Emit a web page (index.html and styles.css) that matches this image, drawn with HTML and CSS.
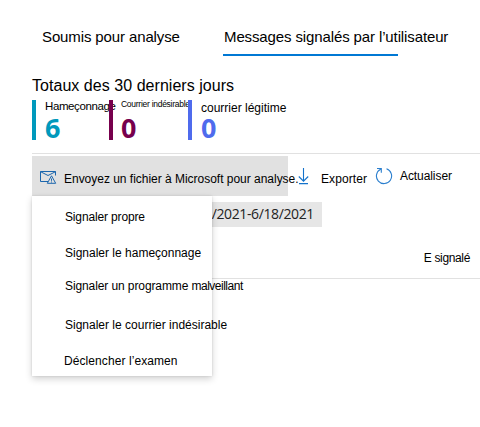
FILE: index.html
```html
<!DOCTYPE html>
<html lang="fr">
<head>
<meta charset="utf-8">
<title>Soumissions</title>
<link rel="stylesheet" href="styles.css">
</head>
<body>
<nav class="tabs">
  <a class="tab"><span>Soumis pour analyse</span></a>
  <a class="tab tab-active"><span>Messages signalés par l’utilisateur</span></a>
</nav>
<main>
  <h1>Totaux des 30 derniers jours</h1>
  <section class="totals">
    <div class="total phish"><span class="label">Hameçonnage</span><b>6</b></div>
    <div class="total spam"><span class="label">Courrier indésirable</span><b>0</b></div>
    <div class="total clean"><span class="label">courrier légitime</span><b>0</b></div>
  </section>
  <div class="toolbar">
    <div class="command submit">
      <svg width="17" height="14" viewBox="0 0 17 14" fill="none" stroke="#1b66ad" stroke-width="1"><path d="M8 11.5H.5V1.5H15.5V5.5M.6 1.7L8 5.5L15.5 1.7M7.3 13.3L11.5 5.8L15.7 13.3ZM11.5 8.5V10.8M11.5 11.5V12.5"/></svg>
      <span>Envoyez un fichier à Microsoft pour analyse.</span>
    </div>
    <div class="command export">
      <svg width="12" height="17" viewBox="0 0 12 17" fill="none" stroke="#1473cb" stroke-width="1.1"><path d="M5.5 0V13M.8 8.5L5.5 13.2L10.2 8.5M1 15.6H10"/></svg>
      <span>Exporter</span>
    </div>
    <div class="command refresh">
      <svg width="18" height="18" viewBox="0 0 18 18" fill="none" stroke="#2b7fce" stroke-width="1.1"><path d="M11.5 1.8A7.6 7.6 0 1 1 5.6 2.2M2 1.5H6.3V5.8"/></svg>
      <span>Actualiser</span>
    </div>
  </div>
  <section class="results">
    <div class="chip">6/11/2021-6/18/2021</div>
    <div class="column-head"><span>E signalé</span></div>
    <ul class="menu">
      <li class="m1">Signaler propre</li>
      <li class="m2">Signaler le hameçonnage</li>
      <li class="m3">Signaler un programme <span>malveillant</span></li>
      <li class="m4">Signaler le courrier indésirable</li>
      <li class="m5">Déclencher l’examen</li>
    </ul>
  </section>
</main>
</body>
</html>
```
FILE: styles.css
```css
* { box-sizing: border-box; }
body {
  margin: 0;
  width: 480px;
  height: 427px;
  overflow: hidden;
  background: #fff;
  color: #000;
  font: 12px/16px "Liberation Sans", Arial, sans-serif;
  white-space: nowrap;
}
.tabs { display: flex; height: 56px; padding: 27px 0 0 42px; font-size: 15px; line-height: 20px; letter-spacing: -.12px; }
.tab { width: 181px; }
.tab-active { width: 175px; padding-left: 1px; border-bottom: 2px solid #0078d4; }
main { padding-left: 32px; }
h1 { margin: 20px 0 0; height: 24px; font-size: 16px; line-height: 20px; font-weight: 400; letter-spacing: .04px; }
.totals { display: flex; height: 53px; }
.total { height: 40px; width: 79px; padding-left: 9px; border-left: 4px solid; display: flex; flex-direction: column; }
.label { flex: none; color: #000; line-height: 12px; height: 12px; }
.total b { flex: none; height: 32px; font: 700 27px/31px "Open Sans", "Noto Sans", sans-serif; }
.phish { width: 77px; color: #0099bc; }
.spam { padding-left: 8px; color: #77004d; }
.clean { color: #4f6bed; }
.phish .label { font-size: 11.5px; letter-spacing: -.4px; }
.spam .label { font-size: 8.5px; line-height: 8px; letter-spacing: -.27px; }
.clean .label { line-height: 16px; }
.toolbar { display: flex; height: 43px; padding-top: 2px; border-top: 1px solid #e1e1e1; }
.command { display: flex; height: 40px; }
.command svg { flex: none; }
.submit { width: 256px; padding-left: 8px; background: #e1e1e1; }
.submit svg { margin: 14px 7px 0 0; }
.submit span { padding-top: 15px; letter-spacing: -.02px; }
.export { width: 86px; padding-left: 10px; }
.export svg { margin: 12px 11px 0 0; }
.export span { padding-top: 15px; letter-spacing: .1px; }
.refresh svg { margin: 11px 7px 0 1px; }
.refresh span { padding-top: 12px; letter-spacing: -.08px; }
.results { position: relative; height: 180px; padding-top: 6px; }
.chip { width: 290px; height: 25px; padding-right: 8px; background: #e6e6e6; color: #222; font: 14px/24px "Open Sans", "Noto Sans", sans-serif; letter-spacing: -.38px; text-align: right; }
.column-head { display: flex; justify-content: flex-end; height: 52px; padding: 23px 10px 0 0; border-bottom: 1px solid #e1e1e1; letter-spacing: -.35px; }
.menu { position: absolute; top: 0; left: 0; width: 180px; height: 180px; margin: 0; padding: 13px 0 0 33px; list-style: none; background: #fff; box-shadow: 0 3px 7px rgba(0,0,0,.18), 0 0 2px rgba(0,0,0,.12); }
.menu li { height: 36px; }
.menu .m1 { letter-spacing: -.15px; }
.menu .m2 { height: 33px; }
.menu .m3 { height: 39px; letter-spacing: -.1px; }
.menu .m3 span { letter-spacing: -.5px; }
.menu .m5 { margin-left: -1px; letter-spacing: .08px; }
```
